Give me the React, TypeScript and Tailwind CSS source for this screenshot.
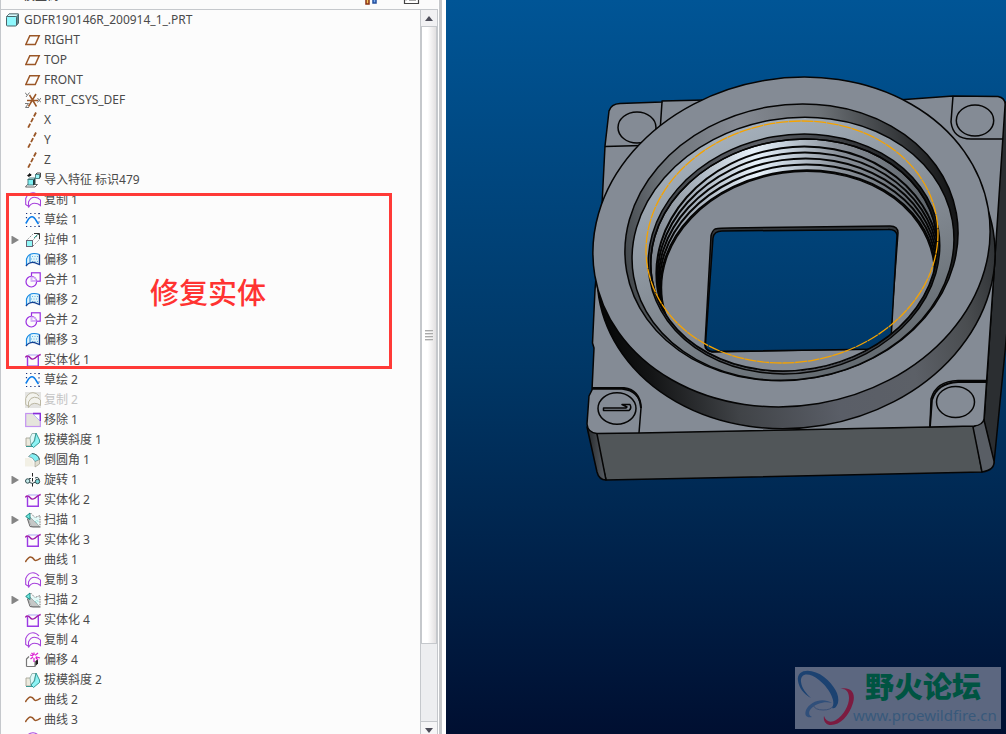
import type { ReactNode } from "react";

type IconName =
  | "part"
  | "plane"
  | "csys"
  | "axis"
  | "import"
  | "copy"
  | "copyOff"
  | "sketch"
  | "extrude"
  | "offset"
  | "merge"
  | "solidify"
  | "remove"
  | "draft"
  | "round"
  | "revolve"
  | "sweep"
  | "curve"
  | "replace";

type TreeNode = {
  icon: IconName;
  label?: string;
  expandable?: boolean;
};

const nodes: TreeNode[] = [
  { icon: "plane", label: "RIGHT" },
  { icon: "plane", label: "TOP" },
  { icon: "plane", label: "FRONT" },
  { icon: "csys", label: "PRT_CSYS_DEF" },
  { icon: "axis", label: "X" },
  { icon: "axis", label: "Y" },
  { icon: "axis", label: "Z" },
  { icon: "import", label: "导入特征 标识479" },
  { icon: "copy", label: "复制 1" },
  { icon: "sketch", label: "草绘 1" },
  { icon: "extrude", label: "拉伸 1", expandable: true },
  { icon: "offset", label: "偏移 1" },
  { icon: "merge", label: "合并 1" },
  { icon: "offset", label: "偏移 2" },
  { icon: "merge", label: "合并 2" },
  { icon: "offset", label: "偏移 3" },
  { icon: "solidify", label: "实体化 1" },
  { icon: "sketch", label: "草绘 2" },
  { icon: "copyOff", label: "复制 2" },
  { icon: "remove", label: "移除 1" },
  { icon: "draft", label: "拔模斜度 1" },
  { icon: "round", label: "倒圆角 1" },
  { icon: "revolve", label: "旋转 1", expandable: true },
  { icon: "solidify", label: "实体化 2" },
  { icon: "sweep", label: "扫描 1", expandable: true },
  { icon: "solidify", label: "实体化 3" },
  { icon: "curve", label: "曲线 1" },
  { icon: "copy", label: "复制 3" },
  { icon: "sweep", label: "扫描 2", expandable: true },
  { icon: "solidify", label: "实体化 4" },
  { icon: "copy", label: "复制 4" },
  { icon: "replace", label: "偏移 4" },
  { icon: "draft", label: "拔模斜度 2" },
  { icon: "curve", label: "曲线 2" },
  { icon: "curve", label: "曲线 3" },
  { icon: "copy" },
];

const copyShape = (
  <>
    <path d="M3 14 .7 12.5V6.5Q3 .7 8 .7 11.5 .7 14 4" />
    <path d="M3.5 15.5V10Q5.5 5.2 9.5 5.2 13 5.2 15.5 8V13.5Q13 11.3 9.5 11.3 5.5 11.3 3.5 15.5Z" />
  </>
);

const icons: Record<IconName, ReactNode> = {
  part: (
    <g stroke="#4b6468">
      <path d="M1.5 4.5 4 2H13.5V11L11.5 13.5" fill="#5b8a90" />
      <path d="M1.5 4.5 4 2H13.5L11.5 4.5Z" fill="#d8fbfd" strokeWidth=".7" />
      <rect x="1.5" y="4.5" width="10" height="9.5" rx="1" fill="#8ff8fd" />
    </g>
  ),
  plane: <path d="M4.8 3.8H14.2L10.2 12.5H.8Z" fill="none" stroke="#9a5626" strokeWidth="1.5" />,
  csys: (
    <g fill="none">
      <path d="M2 8.5H13M4.5 3 11.5 14.5M11 2 3.5 14.5" stroke="#9a5626" strokeWidth="1.5" />
      <path d="M0 .5 2 3M4.5 .5 1 5M12.5 6 16 10.5M16 6 12.5 10.5M0 11.5H3.5L.5 15.5H4" stroke="#777" />
    </g>
  ),
  axis: <path d="M11 .5 3 16" stroke="#9a5626" strokeWidth="1.8" strokeDasharray="4.5 1.8" />,
  import: (
    <g strokeWidth=".9">
      <path d="M6.5 2.5 4 1V2L2 3.5 4.5 5.5V4H6Z" fill="#111" stroke="none" />
      <path d="M.5 15 2.5 12.5H12.5L10 15Z" fill="#fff" stroke="#555" />
      <rect x="3" y="7.5" width="5.5" height="5.5" fill="#7ef1f4" stroke="#41777a" />
      <path d="M8.5 13V7.5L10 6V11.5Z" fill="#1f4f52" stroke="#1f3335" />
      <path d="M3 7.5 4.5 6H10L8.5 7.5Z" fill="#c9f8f8" stroke="#41777a" />
      <rect x="10.5" y="2.5" width="4" height="4" fill="#9cf6f8" stroke="#41777a" />
      <path d="M11 2 12 1H15.5V5L14.5 6" fill="none" stroke="#333" />
    </g>
  ),
  copy: (
    <g fill="none" stroke="#a742dc" strokeWidth="1.1">
      {copyShape}
    </g>
  ),
  copyOff: (
    <g>
      <rect width="16" height="16" fill="#e3e3e1" />
      <g fill="#f3f3ee" stroke="#bbb7a2">
        {copyShape}
      </g>
    </g>
  ),
  sketch: (
    <g fill="none">
      <path d="M1 1.5H15M1 14.5H15" stroke="#16307c" strokeWidth="1.2" strokeDasharray="1.2 3" />
      <path d="M1.5 5V8M14 1V15" stroke="#16307c" strokeWidth="1.2" strokeDasharray="1.2 3" />
      <path d="M.8 11.5C3 8 4 4.8 7 4.8S11 9 13.5 12" stroke="#087bea" strokeWidth="1.6" />
    </g>
  ),
  extrude: (
    <g fill="none">
      <path d="M1.5 8.5 8.5 1.5M7.5 8.5 13.5 2.5M8 14 14.5 7.5" stroke="#8a8f8f" strokeDasharray="1.5 1" />
      <path d="M9 1.5H14.5V7" stroke="#333" />
      <path d="M10 1.5H14.5V3Z" fill="#333" />
      <path d="M9 6 12.500 2.500" stroke="#2aa190" />
      <rect x="1.500" y="8.500" width="6" height="6" fill="#91f8f8" stroke="#667" />
    </g>
  ),
  offset: (
    <g>
      <path d="M1.2 7Q3 2 8 2H14.5V12Q6 8.5 1.2 14Z" fill="#dff4fc" />
      <path d="M7 4.5H13M6 7H13M7 9.5H13" stroke="#68b8de" strokeDasharray="1 1.500" />
      <path d="M1.5 14V7Q3.5 1.5 9 1.5 12 1.5 14.5 2.5" fill="none" stroke="#168ae4" strokeWidth="1.2" />
      <path d="M1 14Q4 10 9 10.5L14.5 12.5V2.5" fill="none" stroke="#123f91" strokeWidth="1.3" />
      <path d="M5 3V10" stroke="#168ae4" />
    </g>
  ),
  merge: (
    <g fill="none" strokeWidth="1.2">
      <rect x="6.5" y=".8" width="8.7" height="8.4" stroke="#9b2ee0" />
      <circle cx="6.3" cy="9.7" r="5.3" stroke="#9b2ee0" />
      <path d="M6.5 4.5V9.200H11.5" stroke="#d7b5f8" strokeWidth="1.5" />
      <path d="M7.3 5.2Q11 6 11 8.6" stroke="#d7b5f8" />
    </g>
  ),
  solidify: (
    <g fill="none">
      <path d="M3 3H13" stroke="#b9b4f7" strokeWidth="1.2" />
      <path d="M2.500 4.5V14.3H13.3V4" stroke="#9b3be5" strokeWidth="1.4" />
      <path d="M.3 5.500C1.500 3.500 3.500 3.500 5 5.500S8 7.500 9.500 6.500 12 3.500 15.700 2.500" stroke="#a01ca8" strokeWidth="1.4" />
    </g>
  ),
  remove: (
    <g>
      <rect x=".7" y="1.5" width="14.6" height="13" fill="#e5e5dc" stroke="#c493f1" strokeWidth="1.2" />
      <path d="M8 2H15V9Z" fill="#fff" stroke="#b9b4f7" />
      <path d="M8 1.5H15.3V9" fill="none" stroke="#8a2bd8" strokeWidth="1.3" />
    </g>
  ),
  draft: (
    <g strokeWidth=".9">
      <path d="M1 6H6V14H1Z" fill="#eceade" stroke="#a7a595" />
      <path d="M5 6 7 1.5H11L9 9 6 13Z" fill="#dffafa" stroke="#8fb0aa" />
      <path d="M11 1 14.5 8V10.5L8.5 15.5 6 13 9.5 9Z" fill="#8df3f4" stroke="#2a908c" />
      <path d="M1 14.500H8" fill="none" stroke="#2a908c" />
    </g>
  ),
  round: (
    <g strokeWidth=".8">
      <path d="M0 6H4Q9 7 9 14.5H0Z" fill="#f2f0e5" />
      <path d="M10 9 14.5 7V12L10 15Z" fill="#e1dfd2" stroke="#aaa797" />
      <path d="M3.5 4.5 7 1.5Q13 2 14.500 7.500L10 9.5Q8 5 3.5 4.5Z" fill="#83eff3" stroke="#739294" />
      <path d="M7 1.5Q13 2 14.5 7.5" fill="none" stroke="#2f5557" />
    </g>
  ),
  revolve: (
    <g fill="none" stroke="#334c4f">
      <path d="M7.5 1V16" stroke="#222" strokeDasharray="3.5 1.5" />
      <circle cx="2.7" cy="9" r="2.2" fill="#c5ecec" />
      <circle cx="12.5" cy="9.500" r="2.2" fill="#7cd8da" />
      <path d="M4.5 10.5Q7.5 12.5 10.5 10M10 6Q13 4 14.500 7.500M4 6.500H6" />
    </g>
  ),
  sweep: (
    <g>
      <path d="M6 4.5 14.5 5V14.5H9Z" fill="#e3faf8" />
      <path d="M2.500 6 5 5 14.5 14.500H6.500Z" fill="#c5c8c7" stroke="#999" strokeWidth=".7" />
      <path d="M.7 4.5 5 1V7.5Z" fill="#6fe9e0" stroke="#127e78" strokeWidth=".9" />
      <path d="M5.500 1 10 5.500 15 3.500V14.500" fill="none" stroke="#777" strokeDasharray="1.500 1" />
      <path d="M10 9 13 12M11.500 8 13.500 10" stroke="#65cfc9" strokeDasharray="1 1" />
      <path d="M2.500 7 5 14.500 8 15H15.500" fill="none" stroke="#555" strokeWidth=".9" />
    </g>
  ),
  curve: <path d="M.3 10Q3.5 5 5.5 5T9.5 8Q11 9.5 15.7 6" fill="none" stroke="#9a5626" strokeWidth="1.5" />,
  replace: (
    <g fill="none">
      <path d="M1.5 14.5V7L4 4.5M1.5 14.5H10V9" stroke="#777" strokeWidth="1.2" />
      <path d="M10.5 14V9L13 7V11.5Z" fill="#222" />
      <path d="M5 3 15 6M9 .5V10M13 1 5.5 7M6.5 .8 13 8" stroke="#db1bd1" strokeWidth="1.2" />
      <circle cx="9.3" cy="4.5" r="1.5" fill="#fff" />
    </g>
  ),
};

function Icon({ name }: { name: IconName }) {
  return (
    <svg viewBox="0 0 16 16" className="size-4 shrink-0" aria-hidden="true">
      {icons[name]}
    </svg>
  );
}

function ModelTree() {
  return (
    <ul className="min-w-0 flex-1 overflow-hidden bg-[#fcfcfc]">
      <li className="flex h-5 items-center gap-[3px] pl-1">
        <Icon name="part" />
        <span className="whitespace-nowrap">GDFR190146R_200914_1_.PRT</span>
      </li>
      {nodes.map((node, index) => (
        <li
          key={index}
          className={
            node.icon === "copyOff"
              ? "flex h-5 items-center pl-2 text-[#c4c4c4]"
              : "flex h-5 items-center pl-2"
          }
        >
          <span className="flex w-4 shrink-0">
            {node.expandable && (
              <button type="button" aria-label={`展开 ${node.label}`} className="ml-0.5">
                <svg viewBox="0 0 8 8" className="size-2">
                  <path d="M.5 -.5 8 4 .5 8.5Z" fill="#858585" />
                </svg>
              </button>
            )}
          </span>
          <Icon name={node.icon} />
          {node.label && <span className="ml-[3px] whitespace-nowrap">{node.label}</span>}
        </li>
      ))}
    </ul>
  );
}

function ScrollBar() {
  return (
    <div className="flex w-[18px] shrink-0 flex-col border-x border-[#c5c8cc] bg-[#edeef0]">
      <button type="button" aria-label="向上滚动" className="flex h-4 shrink-0 items-center justify-center bg-[#f1f1f3]">
        <svg viewBox="0 0 8 5" className="h-[5px] w-2">
          <path d="M0 5 4 0 8 5Z" fill="#4d4d59" />
        </svg>
      </button>
      <div className="flex flex-8 flex-col items-center justify-center gap-px border border-[#c5c8cc] bg-linear-to-r from-white from-40% to-[#e2e0e1]">
        <span className="h-0.5 w-2 border-t border-[#aaa] bg-[#ddd]" />
        <span className="h-0.5 w-2 border-t border-[#aaa] bg-[#ddd]" />
        <span className="h-0.5 w-2 border-t border-[#aaa] bg-[#ddd]" />
        <span className="h-0.5 w-2 border-t border-[#aaa] bg-[#ddd]" />
      </div>
      <div className="flex-1" />
      <button
        type="button"
        aria-label="向下滚动"
        className="-mb-1 flex h-[17px] shrink-0 items-center justify-center border-t border-[#c5c8cc] bg-[#f6f6f7]"
      >
        <svg viewBox="0 0 8 5" className="h-[5px] w-2">
          <path d="M0 0H8L4 5Z" fill="#4d4d59" />
        </svg>
      </button>
    </div>
  );
}

function TreePanel() {
  return (
    <aside className="relative flex w-[446px] shrink-0 bg-white pr-1">
      <div className="flex min-w-0 flex-1 flex-col border-l border-[#c5c8cc] pr-px">
        <header className="flex h-2.5 shrink-0 items-end overflow-hidden border-b border-[#c5c8cc] bg-[#fbfbfb] pl-[22px]">
          <h1 className="pb-[5px] leading-4 font-medium">模型树</h1>
          <svg viewBox="0 0 56 9" className="mr-[18px] ml-auto h-[9px] w-14" aria-hidden="true">
            <path d="M2 0V4H5V0" fill="#f3c65c" stroke="#8b3014" strokeWidth="1.5" />
            <path d="M9 0V3H12V0" fill="#75a9ef" stroke="#254f9d" strokeWidth="1.5" />
            <path d="M40.5 0V3.5H54.5V0" fill="#fff" stroke="#444" strokeWidth="1.2" />
            <path d="M42 0V1M45 .5H52" stroke="#aaa" />
          </svg>
        </header>
        <div className="flex min-h-0 flex-1">
          <ModelTree />
          <ScrollBar />
        </div>
      </div>
      <div className="w-[3px] shrink-0 bg-[#c6c8cb]" />
      <div className="absolute top-[193px] left-1.5 flex h-44 w-[386px] items-center border-3 border-[#ff3a37] pt-6 pl-[141px] text-[29px] leading-8 font-medium text-[#ff3331]">
        修复实体
      </div>
    </aside>
  );
}

// thread crests, each one lower and a little narrower than the one before
const threads = [
  { cy: 268, rx: 142, ry: 121 },
  { cy: 271, rx: 141, ry: 118 },
  { cy: 274, rx: 140, ry: 115 },
  { cy: 277, rx: 139, ry: 112 },
  { cy: 280, rx: 138, ry: 109 },
];

function Model() {
  return (
    <svg viewBox="446 0 560 734" preserveAspectRatio="xMidYMid slice" className="h-full w-full" aria-hidden="true">
      <defs>
        <linearGradient id="sky" gradientUnits="userSpaceOnUse" x1="0" y1="0" x2="0" y2="734">
          <stop offset="0" stopColor="#005596" />
          <stop offset=".5" stopColor="#003766" />
          <stop offset="1" stopColor="#000f31" />
        </linearGradient>
        <linearGradient id="barrel" gradientUnits="userSpaceOnUse" x1="595" y1="0" x2="995" y2="0">
          <stop offset="0" stopColor="#050606" />
          <stop offset=".1" stopColor="#141516" />
          <stop offset=".3" stopColor="#404347" />
          <stop offset=".55" stopColor="#5a5e67" />
          <stop offset=".75" stopColor="#5c6067" />
          <stop offset=".9" stopColor="#4a4d50" />
          <stop offset="1" stopColor="#303336" />
        </linearGradient>
        <linearGradient id="chamfer" gradientUnits="userSpaceOnUse" x1="625" y1="0" x2="958" y2="0">
          <stop offset="0" stopColor="#44494d" />
          <stop offset=".15" stopColor="#6c7278" />
          <stop offset=".4" stopColor="#858a93" />
          <stop offset=".65" stopColor="#6d7277" />
          <stop offset=".85" stopColor="#3b3e41" />
          <stop offset="1" stopColor="#151617" />
        </linearGradient>
        <linearGradient id="bore" gradientUnits="userSpaceOnUse" x1="760" y1="117" x2="820" y2="381">
          <stop offset="0" stopColor="#a5b0bb" />
          <stop offset=".25" stopColor="#949ea8" />
          <stop offset=".6" stopColor="#7f868e" />
          <stop offset="1" stopColor="#636a70" />
        </linearGradient>
        <linearGradient id="groove" gradientUnits="userSpaceOnUse" x1="650" y1="0" x2="940" y2="0">
          <stop offset="0" stopColor="#3a3d41" />
          <stop offset=".45" stopColor="#5c6067" />
          <stop offset="1" stopColor="#17191a" />
        </linearGradient>
        <linearGradient id="thread" gradientUnits="userSpaceOnUse" x1="650" y1="0" x2="940" y2="0">
          <stop offset="0" stopColor="#7b828b" />
          <stop offset=".22" stopColor="#adb7c2" />
          <stop offset=".42" stopColor="#e7f1fa" />
          <stop offset=".53" stopColor="#c6d1dc" />
          <stop offset=".7" stopColor="#8b929b" />
          <stop offset="1" stopColor="#5c6268" />
        </linearGradient>
        <linearGradient id="cornerLeft" x1="0" x2="1">
          <stop offset="0" stopColor="#25282a" />
          <stop offset="1" stopColor="#5a5f66" />
        </linearGradient>
        <clipPath id="inner">
          <ellipse cx="794" cy="255" rx="144" ry="115" transform="rotate(-10 794 255)" />
        </clipPath>
      </defs>

      <rect x="-1000" width="3000" height="734" fill="url(#sky)" />

      <g stroke="#050505" strokeWidth="1.5" strokeLinejoin="round">
        {/* sides of the base plate */}
        <path d="M1002 100 1008 104V320L1005 352 994 463 984 422 995 257Z" fill="#2b2e31" />
        <path d="M595 433 974 426 982 472 606 480Z" fill="#515659" />
        <path d="M587 427 597 472Q599 480 606 480L597 434Z" fill="url(#cornerLeft)" />
        <path d="M973 427 984 420 994 461Q995 470 982 472Z" fill="#595e65" />

        {/* front face of the plate */}
        <path
          d="M609 111Q611 104 620 103.5L662 102V101L705 100H898L953 96 998 96.5Q1006 98 1005 106L995 257 984 419Q983 425 974 426L930 427 639 433 597 433.5Q588 433 587 424L589 396 592 390 594 348 592.5 343 595 290 602 205 605 146Z"
          fill="#848b95"
        />
        <g fill="none">
          <path d="M662 102 660 132M605 146.5 642 145.5" />
          <path d="M953 96 951 122Q953 139 971 139H1003" />
          <path d="M930 427 932 400Q937 383 958 382H986" strokeWidth="1.8" />
          <path d="M930 426 931 399Q936 381 958 380.5H986" />
          <path d="M592 389H622Q640 391 641 408L639 433" />
          <path d="M592 388H624Q640 390 641 408" strokeWidth="2" />
          <ellipse cx="637" cy="127.5" rx="19" ry="15.5" />
          <ellipse cx="975" cy="120.5" rx="18.7" ry="15.5" />
          <ellipse cx="955.5" cy="402" rx="19" ry="15.5" />
          <ellipse cx="617" cy="408.5" rx="19" ry="15.7" />
          <path d="M603.5 408V410.5H629Q632 408 630 404.5L622 404.5 627 407 626 408Z" />
        </g>

        {/* barrel and rings */}
        <ellipse cx="796" cy="264" rx="200" ry="163.5" transform="rotate(-9.6 796 264)" fill="url(#barrel)" />
        <ellipse cx="791.5" cy="242" rx="199.5" ry="163.8" transform="rotate(-9.6 791.5 242)" fill="#848b95" />
        <ellipse cx="791.5" cy="242.3" rx="167.4" ry="137.4" transform="rotate(-10 791.5 242.3)" fill="url(#chamfer)" />
        <ellipse cx="793" cy="248.8" rx="161.8" ry="130.5" transform="rotate(-10 793 248.8)" fill="url(#bore)" />
        <ellipse cx="794" cy="254" rx="146.5" ry="119" transform="rotate(-10 794 254)" fill="url(#groove)" />
        <ellipse cx="794" cy="255" rx="144" ry="115" transform="rotate(-10 794 255)" fill="url(#thread)" />

        <g clipPath="url(#inner)">
          {threads.map((t) => (
            <ellipse
              key={t.cy}
              cx="798"
              cy={t.cy}
              rx={t.rx}
              ry={t.ry}
              transform={`rotate(-8 798 ${t.cy})`}
              fill="url(#thread)"
              strokeWidth="2"
            />
          ))}
          <ellipse cx="798" cy="281" rx="137" ry="109" transform="rotate(-8 798 281)" fill="#848b95" />
          <path
            d="M715 229Q720 228 730 228L890 226Q898 226 898 233L890 340 870 349 712 352Q704 350 705 344L711 236Q712 231 715 229Z"
            fill="#33373b"
          />
          <path d="M713 238Q714 231 722 231L888 229.5Q896 229 897 235L890.5 349 712 351.5Q705 350 705.5 344Z" fill="url(#sky)" />
        </g>
        <ellipse cx="794" cy="255" rx="144" ry="115" transform="rotate(-10 794 255)" fill="none" />
      </g>

      <ellipse
        cx="792"
        cy="242"
        rx="146.7"
        ry="120.1"
        transform="rotate(-10 792 242)"
        fill="none"
        stroke="#f5a300"
        strokeWidth="1.3"
        strokeDasharray="12 .7"
      />
    </svg>
  );
}

function Watermark() {
  return (
    <div className="absolute right-[5px] bottom-[5px] flex h-[62px] w-[206px] bg-[#5c6780]">
      <svg viewBox="0 0 60 62" className="h-[62px] w-[60px] shrink-0" aria-hidden="true">
        <path
          fillRule="evenodd"
          d="M3 14C1 1 18 1 29 10 39 18 45 28 43 36 41 41 39 42 37 41 42 34 33 20 24 13 14 5 5 6 6 15 7 22 11 26 16 31 9 27 4 21 3 14Z"
          fill="#1c4271"
        />
        <path
          d="M44 22C56 19 61 26 58 36 54 49 45 58 36 58 31 58 28 54 29 49 31 55 36 56 41 53 49 48 54 38 54 31 54 24 50 21 44 22Z"
          fill="#7c1b40"
        />
        <path d="M37 36C27 30 15 35 11 43 9 49 12 51 17 50 11 47 15 40 23 37 28 35 33 35 37 36Z" fill="#304f7a" />
        <path d="M18 38Q20 43 28 43 36 43 38 39" fill="none" stroke="#394f75" />
      </svg>
      <div className="flex flex-col pt-1 pl-[10px]">
        <span className="text-[29px] leading-8 font-black whitespace-nowrap text-[#005442]">野火论坛</span>
        <span className="-ml-3 text-[15px] leading-6 whitespace-nowrap text-[#38597b]">www.proewildfire.cn</span>
      </div>
    </div>
  );
}

export default function App() {
  return (
    <div className="flex h-screen overflow-hidden bg-white font-['Noto_Sans','Noto_Sans_CJK_SC',sans-serif] text-xs text-[#4a4a4a]">
      <TreePanel />
      <main className="relative min-w-0 flex-1 overflow-hidden bg-[#003766]">
        <Model />
        <Watermark />
      </main>
    </div>
  );
}
